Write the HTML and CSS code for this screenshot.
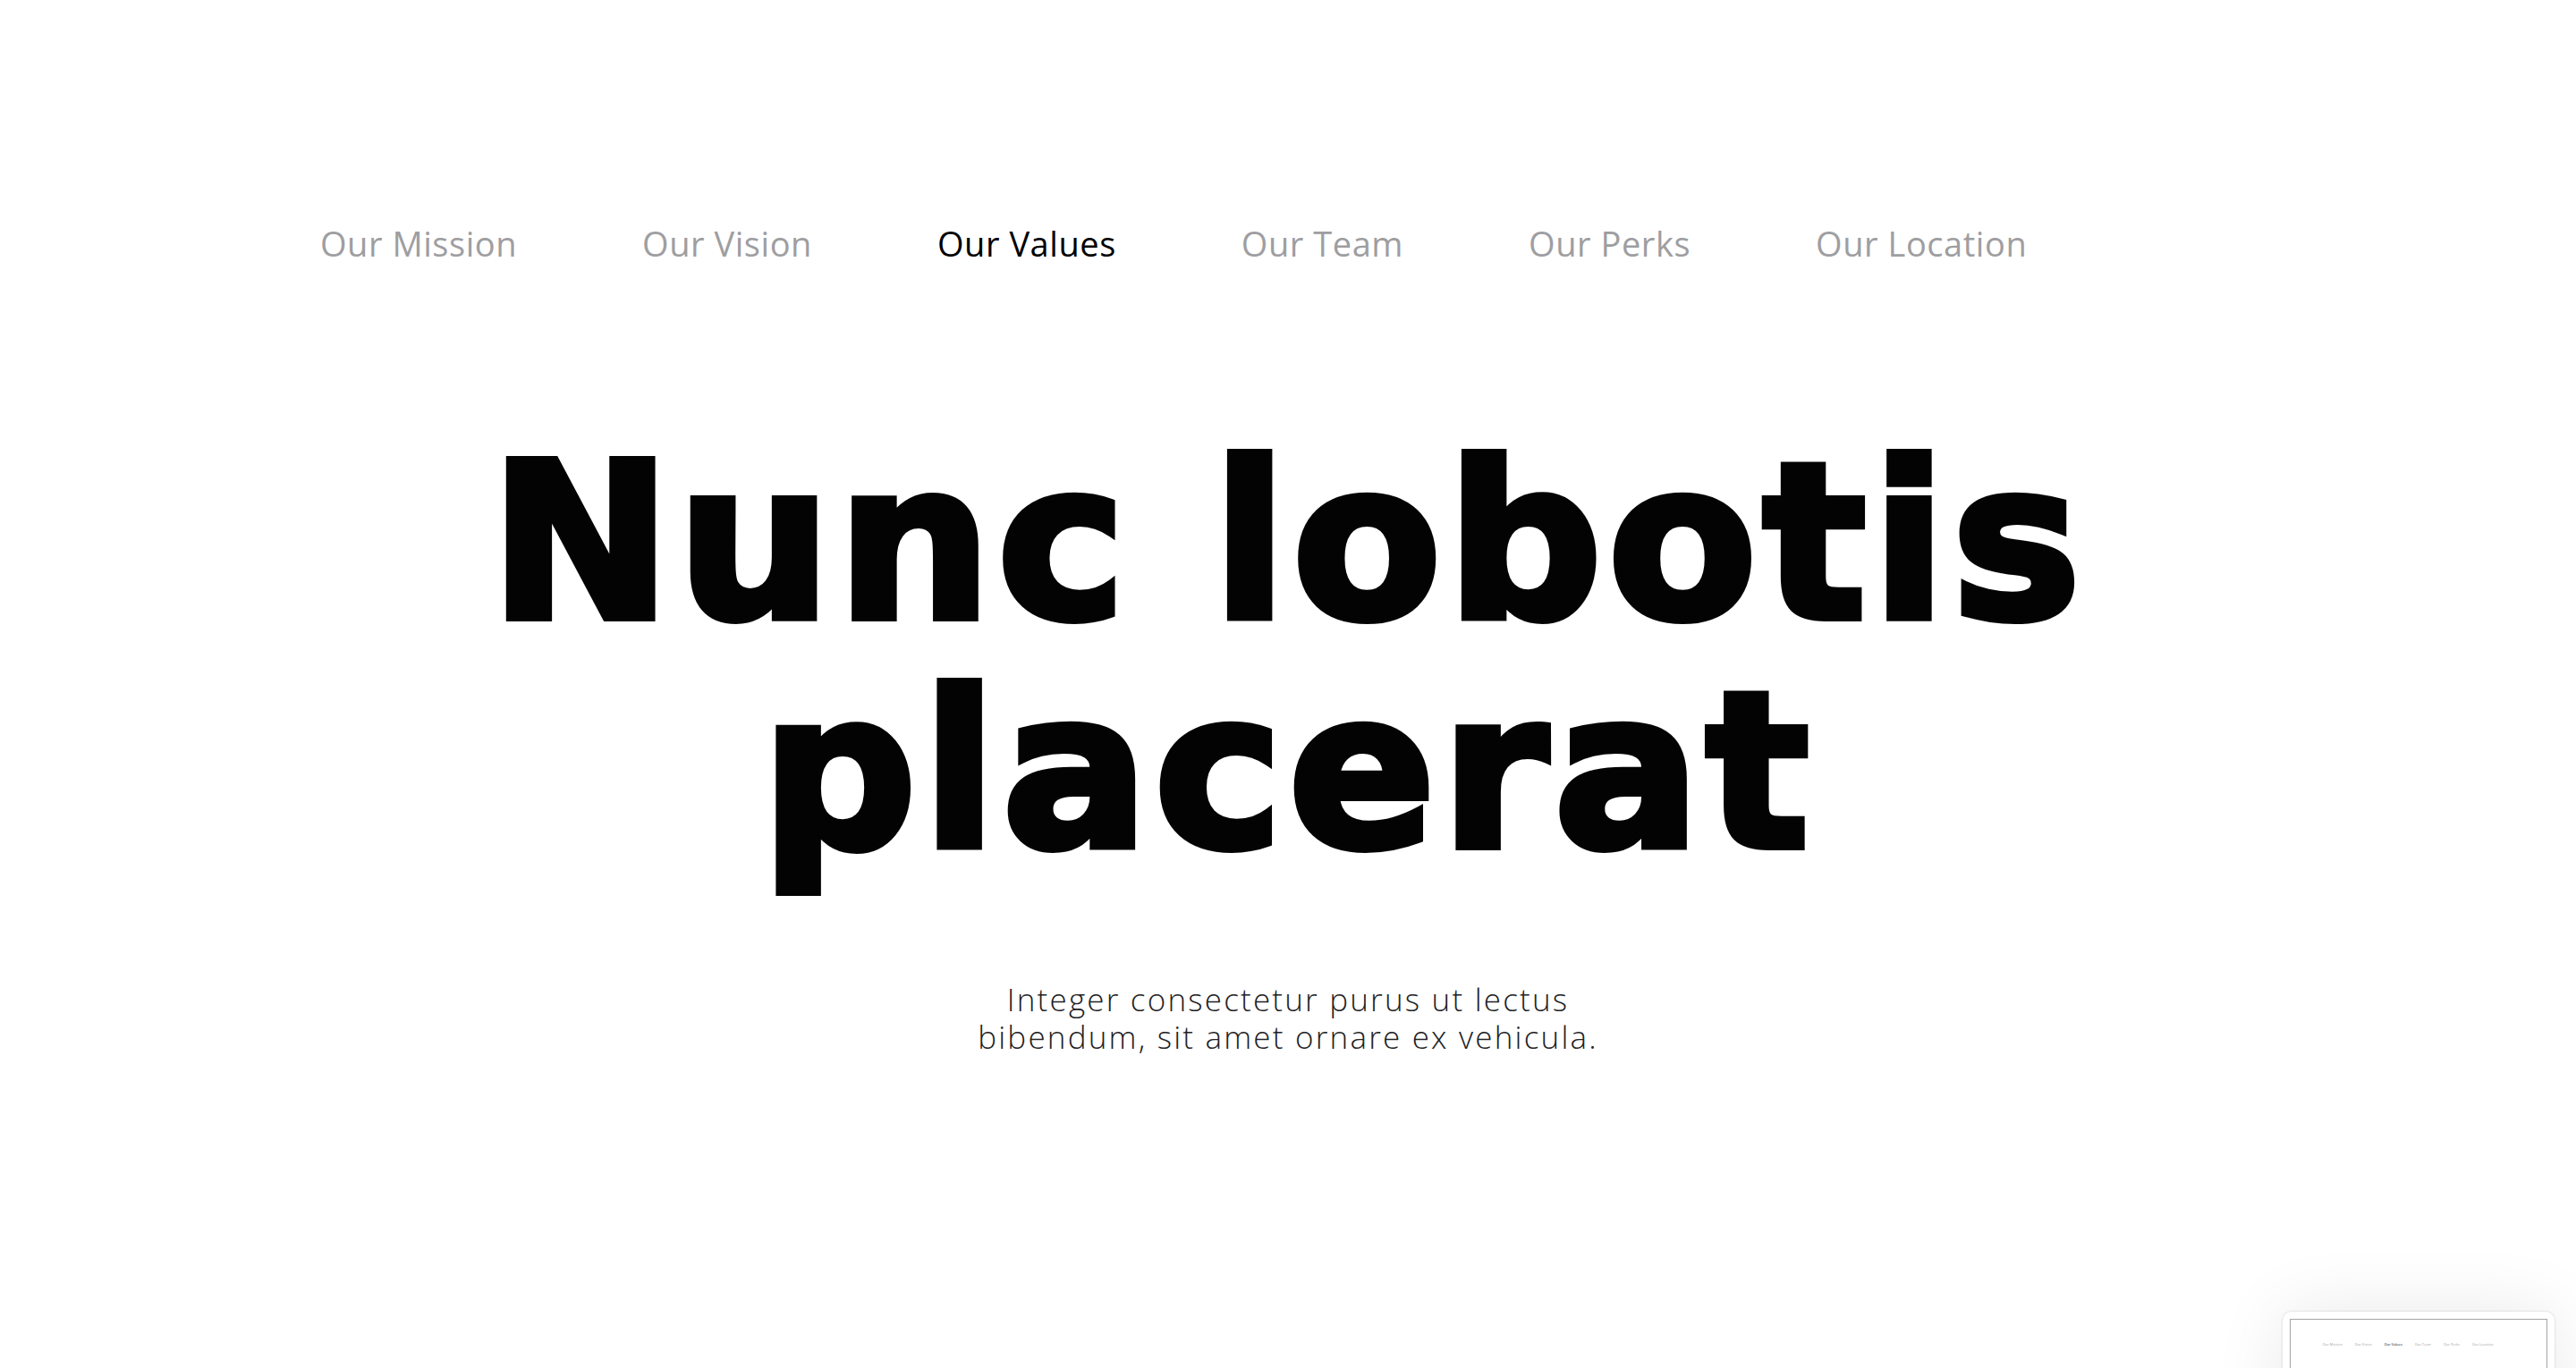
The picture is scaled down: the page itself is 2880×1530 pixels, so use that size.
FILE: index.html
```html
<!DOCTYPE html>
<html lang="en">
<head>
<meta charset="utf-8">
<title>Our Values</title>
<link rel="stylesheet" href="styles.css">
</head>
<body>
<div class="page">
  <nav class="tabs">
    <a class="tab">Our Mission</a>
    <a class="tab">Our Vision</a>
    <a class="tab active">Our Values</a>
    <a class="tab">Our Team</a>
    <a class="tab">Our Perks</a>
    <a class="tab">Our Location</a>
  </nav>
  <h1 class="title">Nunc lobotis<br>placerat</h1>
  <p class="lead">Integer consectetur purus ut lectus<br>bibendum, sit amet ornare ex vehicula.</p>
</div>

<aside class="preview" aria-hidden="true">
  <div class="preview-frame">
    <div class="page mini">
      <nav class="tabs">
        <a class="tab">Our Mission</a>
        <a class="tab">Our Vision</a>
        <a class="tab active">Our Values</a>
        <a class="tab">Our Team</a>
        <a class="tab">Our Perks</a>
        <a class="tab">Our Location</a>
      </nav>
    </div>
  </div>
</aside>
</body>
</html>
```
FILE: styles.css
```css
html, body {
  margin: 0;
  padding: 0;
  background: #ffffff;
  overflow: hidden;
}

.page {
  width: 2880px;
  height: 1530px;
  box-sizing: border-box;
  padding-top: 250px;
  display: flex;
  flex-direction: column;
  background: #ffffff;
}

.tabs {
  display: flex;
  gap: 140px;
  padding-left: 358px;
  font-family: "Open Sans", "DejaVu Sans", sans-serif;
  font-size: 38px;
  line-height: 44px;
  font-weight: 400;
  letter-spacing: 0.55px;
}

.tab {
  color: #9e9ea1;
  text-decoration: none;
  white-space: nowrap;
}

.tab.active {
  color: #000000;
}

.title {
  margin: 185px 0 0 0;
  text-align: center;
  font-family: "DejaVu Sans", sans-serif;
  font-weight: 700;
  font-size: 243px;
  line-height: 256px;
  letter-spacing: 6px;
  color: #030304;
  -webkit-text-stroke: 8px #030304;
}

.lead {
  margin: 106px 0 0 0;
  text-align: center;
  font-family: "Open Sans", "DejaVu Sans", sans-serif;
  font-weight: 300;
  font-size: 35px;
  line-height: 42px;
  letter-spacing: 2.2px;
  color: #222224;
}

.preview {
  position: fixed;
  left: 2552px;
  top: 1467px;
  width: 304px;
  height: 200px;
  box-sizing: border-box;
  padding: 8px;
  background: #ffffff;
  border-radius: 10px;
  box-shadow: 0 0 3px rgba(0, 0, 0, 0.18), 0 0 80px rgba(0, 0, 0, 0.09);
}

.preview-frame {
  width: 288px;
  height: 153px;
  box-sizing: border-box;
  border: 1px solid #a4a4a6;
  overflow: hidden;
}

.page.mini {
  transform: scale(0.1);
  transform-origin: 0 0;
}
```
